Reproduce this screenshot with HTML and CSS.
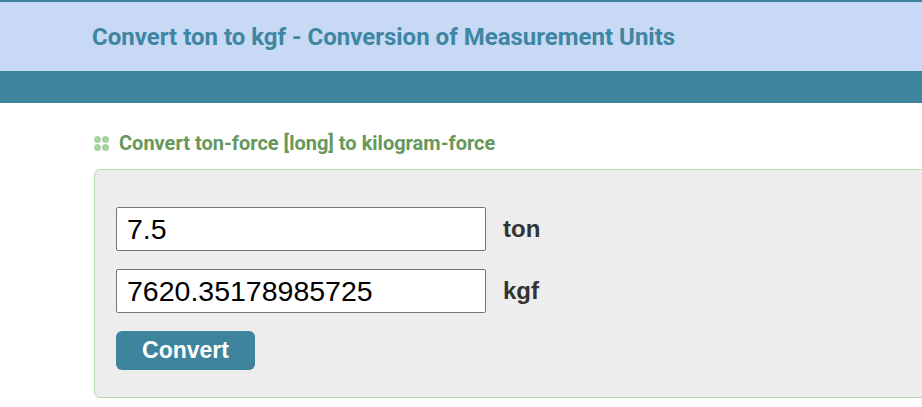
FILE: index.html
```html
<!DOCTYPE html>
<html>
  <head>
    <meta charset="utf-8" />
    <title>Convert ton to kgf</title>
    <link rel="stylesheet" href="styles.css">
  </head>
  <body>
    <div class="page">
      <header class="top">
        <h1 class="title">Convert ton to kgf - Conversion of Measurement Units</h1>
      </header>
      <nav class="menu"></nav>

      <main class="content">
        <h2 class="subtitle">
          <span class="dots"><i></i><i></i><i></i><i></i></span>
          Convert ton-force [long] to kilogram-force
        </h2>

        <form class="converter" onsubmit="convert(); return false;">
          <div class="row">
            <input id="from" class="field" type="text" value="7.5">
            <label class="unit" for="from">ton</label>
          </div>
          <div class="row">
            <input id="to" class="field" type="text" value="7620.35178985725">
            <label class="unit" for="to">kgf</label>
          </div>
          <button class="btn" type="submit">Convert</button>
        </form>
      </main>
    </div>

    <script>
      function convert() {
        var v = parseFloat(from.value.replace(",", "."));
        if (!isNaN(v)) to.value = v * 1016.0469053676;
      }
    </script>
  </body>
</html>
```

FILE: styles.css
```css
html,
body {
  margin: 0;
  background: white;
}
.page {
  overflow: hidden;
  height: 100vh;
}
.top {
  background: #c7d9f4;
  border-top: 2px solid #3e849d;
  height: 69px;
  padding-left: 92px;
}
.title {
  margin: 0;
  font-family: Roboto, sans-serif;
  font-weight: bold;
  font-size: 24px;
  line-height: 71px;
  color: #3e86a1;
}
.menu {
  background: #3e849d;
  height: 32px;
}
.content {
  padding: 28px 0 0 94px;
}
.subtitle {
  display: flex;
  align-items: center;
  gap: 10px;
  margin: 0 0 14px;
  font-family: Roboto, sans-serif;
  font-weight: bold;
  font-size: 20px;
  line-height: 24px;
  color: #66985b;
}
.dots {
  display: grid;
  grid-template-columns: 7px 7px;
  gap: 1px;
}
.dots i {
  width: 7px;
  height: 7px;
  border-radius: 50%;
  background: #a9d4a1;
}
.converter {
  width: 860px;
  background: #ededed;
  border: 1px solid #b7dcae;
  border-radius: 6px;
  padding: 37px 21px 27px;
  font-family: "Liberation Sans", Arial, sans-serif;
}
.row {
  display: flex;
  align-items: center;
  gap: 17px;
  margin-bottom: 18px;
}
.field {
  box-sizing: border-box;
  width: 370px;
  height: 44px;
  margin: 0;
  padding: 0 10px;
  border: 1px solid #767676;
  border-radius: 2px;
  background: white;
  font-family: "Liberation Sans", Arial, sans-serif;
  font-size: 28.5px;
  color: black;
}
.unit {
  font-weight: bold;
  font-size: 24px;
  color: #333;
}
.btn {
  display: block;
  width: 139px;
  height: 39px;
  border: 0;
  border-radius: 6px;
  background: #3e849d;
  color: white;
  font-family: "Liberation Sans", Arial, sans-serif;
  font-weight: bold;
  font-size: 23px;
  cursor: pointer;
}
```
